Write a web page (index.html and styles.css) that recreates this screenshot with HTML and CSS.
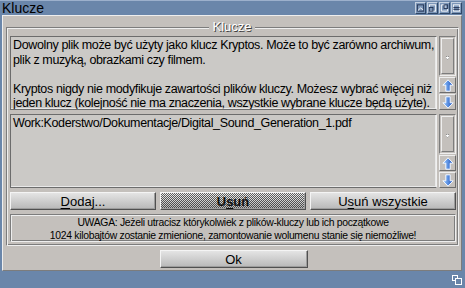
FILE: index.html
```html
<!DOCTYPE html>
<html lang="pl">
<head>
  <meta charset="UTF-8">
  <title>Klucze</title>
  <link rel="stylesheet" href="styles.css">
</head>
<body>
  <div class="window">
    <div class="titlebar">
      <span class="title">Klucze</span>
      <div class="gadgets">
        <span class="gadget">
          <svg width="10" height="10" viewBox="0 0 10 10"><rect x="1.5" y="1.5" width="7" height="7" fill="none" stroke="#203050"/><path d="M2 8 L5 5 L8 7" fill="none" stroke="#fff"/></svg>
        </span>
        <span class="gadget">
          <svg width="10" height="10" viewBox="0 0 10 10"><rect x="1.5" y="1.5" width="7" height="7" fill="none" stroke="#fff"/><rect x="1.5" y="4.5" width="4" height="4" fill="none" stroke="#203050"/></svg>
        </span>
        <span class="gadget">
          <svg width="10" height="10" viewBox="0 0 10 10"><path d="M1.5 1.5 H5.5 V5.5 H8.5 V8.5 H1.5 Z" fill="none" stroke="#fff"/><rect x="4.5" y="1.5" width="4" height="4" fill="none" stroke="#203050"/></svg>
        </span>
        <span class="gadget">
          <svg width="10" height="10" viewBox="0 0 10 10"><rect x="1.5" y="1.5" width="7" height="7" fill="none" stroke="#fff"/><path d="M1.5 4.5 H8.5 M1.5 6.5 H8.5" stroke="#203050"/></svg>
        </span>
      </div>
    </div>

    <div class="main">
      <div class="group">
        <div class="group-title">Klucze</div>

        <div class="listrow">
          <div class="textbox">
            Dowolny plik może być użyty jako klucz Kryptos. Może to być zarówno archiwum,<br>
            plik z muzyką, obrazkami czy filmem.<br>
            <br>
            Kryptos nigdy nie modyfikuje zawartości plików kluczy. Możesz wybrać więcej niż<br>
            jeden klucz (kolejność nie ma znaczenia, wszystkie wybrane klucze będą użyte).
          </div>
          <div class="scroller">
            <div class="prop"><span class="knob"></span></div>
            <div class="arrow">
              <svg width="12" height="13" viewBox="0 0 12 13"><defs><linearGradient id="blue" x1="0" x2="1" y1="0" y2="0"><stop offset="0" stop-color="#9cccff"/><stop offset="1" stop-color="#1850c0"/></linearGradient></defs><path d="M6 0.8 L11.2 6.2 H8.2 V12.2 H3.8 V6.2 H0.8 Z" fill="url(#blue)" stroke="#f4f8ff" stroke-width="1"/></svg>
            </div>
            <div class="arrow">
              <svg width="12" height="13" viewBox="0 0 12 13"><path d="M6 12.2 L11.2 6.8 H8.2 V0.8 H3.8 V6.8 H0.8 Z" fill="url(#blue)" stroke="#f4f8ff" stroke-width="1"/></svg>
            </div>
          </div>
        </div>

        <div class="listrow">
          <div class="textbox">Work:Koderstwo/Dokumentacje/Digital_Sound_Generation_1.pdf</div>
          <div class="scroller">
            <div class="prop"><span class="knob"></span></div>
            <div class="arrow">
              <svg width="12" height="13" viewBox="0 0 12 13"><path d="M6 0.8 L11.2 6.2 H8.2 V12.2 H3.8 V6.2 H0.8 Z" fill="url(#blue)" stroke="#f4f8ff" stroke-width="1"/></svg>
            </div>
            <div class="arrow">
              <svg width="12" height="13" viewBox="0 0 12 13"><path d="M6 12.2 L11.2 6.8 H8.2 V0.8 H3.8 V6.8 H0.8 Z" fill="url(#blue)" stroke="#f4f8ff" stroke-width="1"/></svg>
            </div>
          </div>
        </div>

        <div class="buttons">
          <button class="btn"><u>D</u>odaj...</button>
          <button class="btn disabled">U<u>s</u>uń</button>
          <button class="btn">U<u>s</u>uń wszystkie</button>
        </div>

        <div class="warning">
          UWAGA: Jeżeli utracisz którykolwiek z plików-kluczy lub ich początkowe<br>
          1024 kilobajtów zostanie zmienione, zamontowanie wolumenu stanie się niemożliwe!
        </div>
      </div>

      <div class="okrow">
        <button class="btn ok">Ok</button>
      </div>
    </div>

    <div class="bottombar">
      <span class="sizer">
        <svg width="10" height="10" viewBox="0 0 10 10"><rect x="0.5" y="0.5" width="5" height="5" fill="none" stroke="#fff"/><rect x="3.5" y="3.5" width="6" height="6" fill="#6884a8" stroke="#fff"/></svg>
      </span>
    </div>
  </div>
</body>
</html>
```

FILE: styles.css
```css
body {
  margin: 0;
  background: #000;
}
.window {
  width: 465px;
  height: 288px;
  background: #6a86aa;
  display: flex;
  flex-direction: column;
  font-family: 'Liberation Sans', sans-serif;
  color: #000;
}
.titlebar {
  height: 15px;
  display: flex;
  align-items: center;
  justify-content: space-between;
  padding: 0 3px 0 2px;
  border-top: 1px solid #9cb0cc;
  box-sizing: border-box;
}
.title {
  font-size: 14px;
  line-height: 14px;
}
.gadgets {
  display: flex;
  gap: 1px;
}
.gadget {
  width: 9px;
  height: 10px;
  display: flex;
  background: #7c96b8;
  border: 1px solid;
  border-color: #c4d0e0 #304868 #304868 #c4d0e0;
}
.main {
  flex: 1;
  min-width: 0;
  margin: 0 3px 0 2px;
  background: #c4c0bc;
  border-top: 1px solid #eeeeee;
  border-left: 1px solid #eeeeee;
  border-right: 1px solid #7c7c7c;
  border-bottom: 1px solid #7c7c7c;
  padding: 11px 2px 0 3px;
  display: flex;
  flex-direction: column;
}
.group {
  padding: 0 2px 3px 1px;
  border: 1px solid;
  border-color: #7c7c7c #eeeeee #eeeeee #7c7c7c;
  box-shadow: inset 1px 1px 0 #eeeeee, inset -1px -1px 0 #7c7c7c;
  display: flex;
  flex-direction: column;
  gap: 4px;
}
.group-title {
  align-self: center;
  margin: -8px 0 -2px;
  padding: 0 3px;
  background: #c4c0bc;
  font-size: 13px;
  line-height: 14px;
  color: #fff;
  text-shadow: 1px 1px 0 #404040;
}
.listrow {
  height: 74px;
  display: flex;
  gap: 2px;
  padding-left: 2px;
}
.textbox {
  flex: 1;
  min-width: 0;
  background: #cbc9c6;
  border: 1px solid;
  border-color: #6c6c6c #f0f0f0 #6c6c6c #6c6c6c;
  box-shadow: inset -1px -1px 0 #e8e8e8;
  padding: 1px 2px 0;
  font-size: 12.5px;
  letter-spacing: -0.37px;
  line-height: 14.6px;
  white-space: nowrap;
  overflow: hidden;
}
.scroller {
  width: 17px;
  flex-shrink: 0;
  display: flex;
  flex-direction: column;
  gap: 1px;
}
.prop {
  flex: 1;
  border: 1px solid;
  border-color: #7c7c7c #eeeeee #eeeeee #7c7c7c;
  padding: 1px;
  display: flex;
}
.knob {
  flex: 1;
  border: 1px solid;
  border-color: #eeeeee #7c7c7c #7c7c7c #eeeeee;
  background: radial-gradient(circle at 50% 55%, #fff 0 1px, #888 1.5px, transparent 2px);
}
.arrow {
  height: 14px;
  display: flex;
  align-items: center;
  justify-content: center;
  border: 1px solid;
  border-color: #eeeeee #6c6c6c #6c6c6c #eeeeee;
  background: #c4c0bc;
}
.buttons {
  display: flex;
  gap: 4px;
  padding-left: 2px;
}
.btn {
  height: 18px;
  padding: 0;
  font-family: 'Liberation Sans', sans-serif;
  font-size: 13px;
  color: #000;
  background: linear-gradient(#e4e4e4, #b8b8b8);
  border: 1px solid;
  border-color: #f4f4f4 #505050 #505050 #f4f4f4;
  box-shadow: inset -1px -1px 0 #9c9c9c;
}
.buttons .btn {
  flex: 1;
  min-width: 0;
}
.btn u {
  text-underline-offset: 2px;
}
.disabled {
  background-color: #cfcfcf;
  background-image: repeating-conic-gradient(rgba(0, 0, 0, 0.6) 0 25%, transparent 0 50%), linear-gradient(#f0f0f0, #b4b4b4);
  background-size: 2px 2px, auto;
  font-weight: bold;
  color: #101010;
}
.warning {
  margin-left: 2px;
  height: 28px;
  box-sizing: border-box;
  border: 1px solid;
  border-color: #7c7c7c #eeeeee #eeeeee #7c7c7c;
  box-shadow: inset 1px 1px 0 #eeeeee, inset -1px -1px 0 #7c7c7c;
  text-align: center;
  font-size: 10.4px;
  letter-spacing: -0.3px;
  line-height: 13px;
  padding-top: 1px;
  white-space: nowrap;
  overflow: hidden;
}
.okrow {
  display: flex;
  justify-content: center;
  padding: 4px 0 0 2px;
}
.ok {
  width: 148px;
  height: 18px;
}
.bottombar {
  height: 17px;
  display: flex;
  justify-content: flex-end;
  align-items: center;
  padding-right: 3px;
}
.sizer {
  display: flex;
}
```
